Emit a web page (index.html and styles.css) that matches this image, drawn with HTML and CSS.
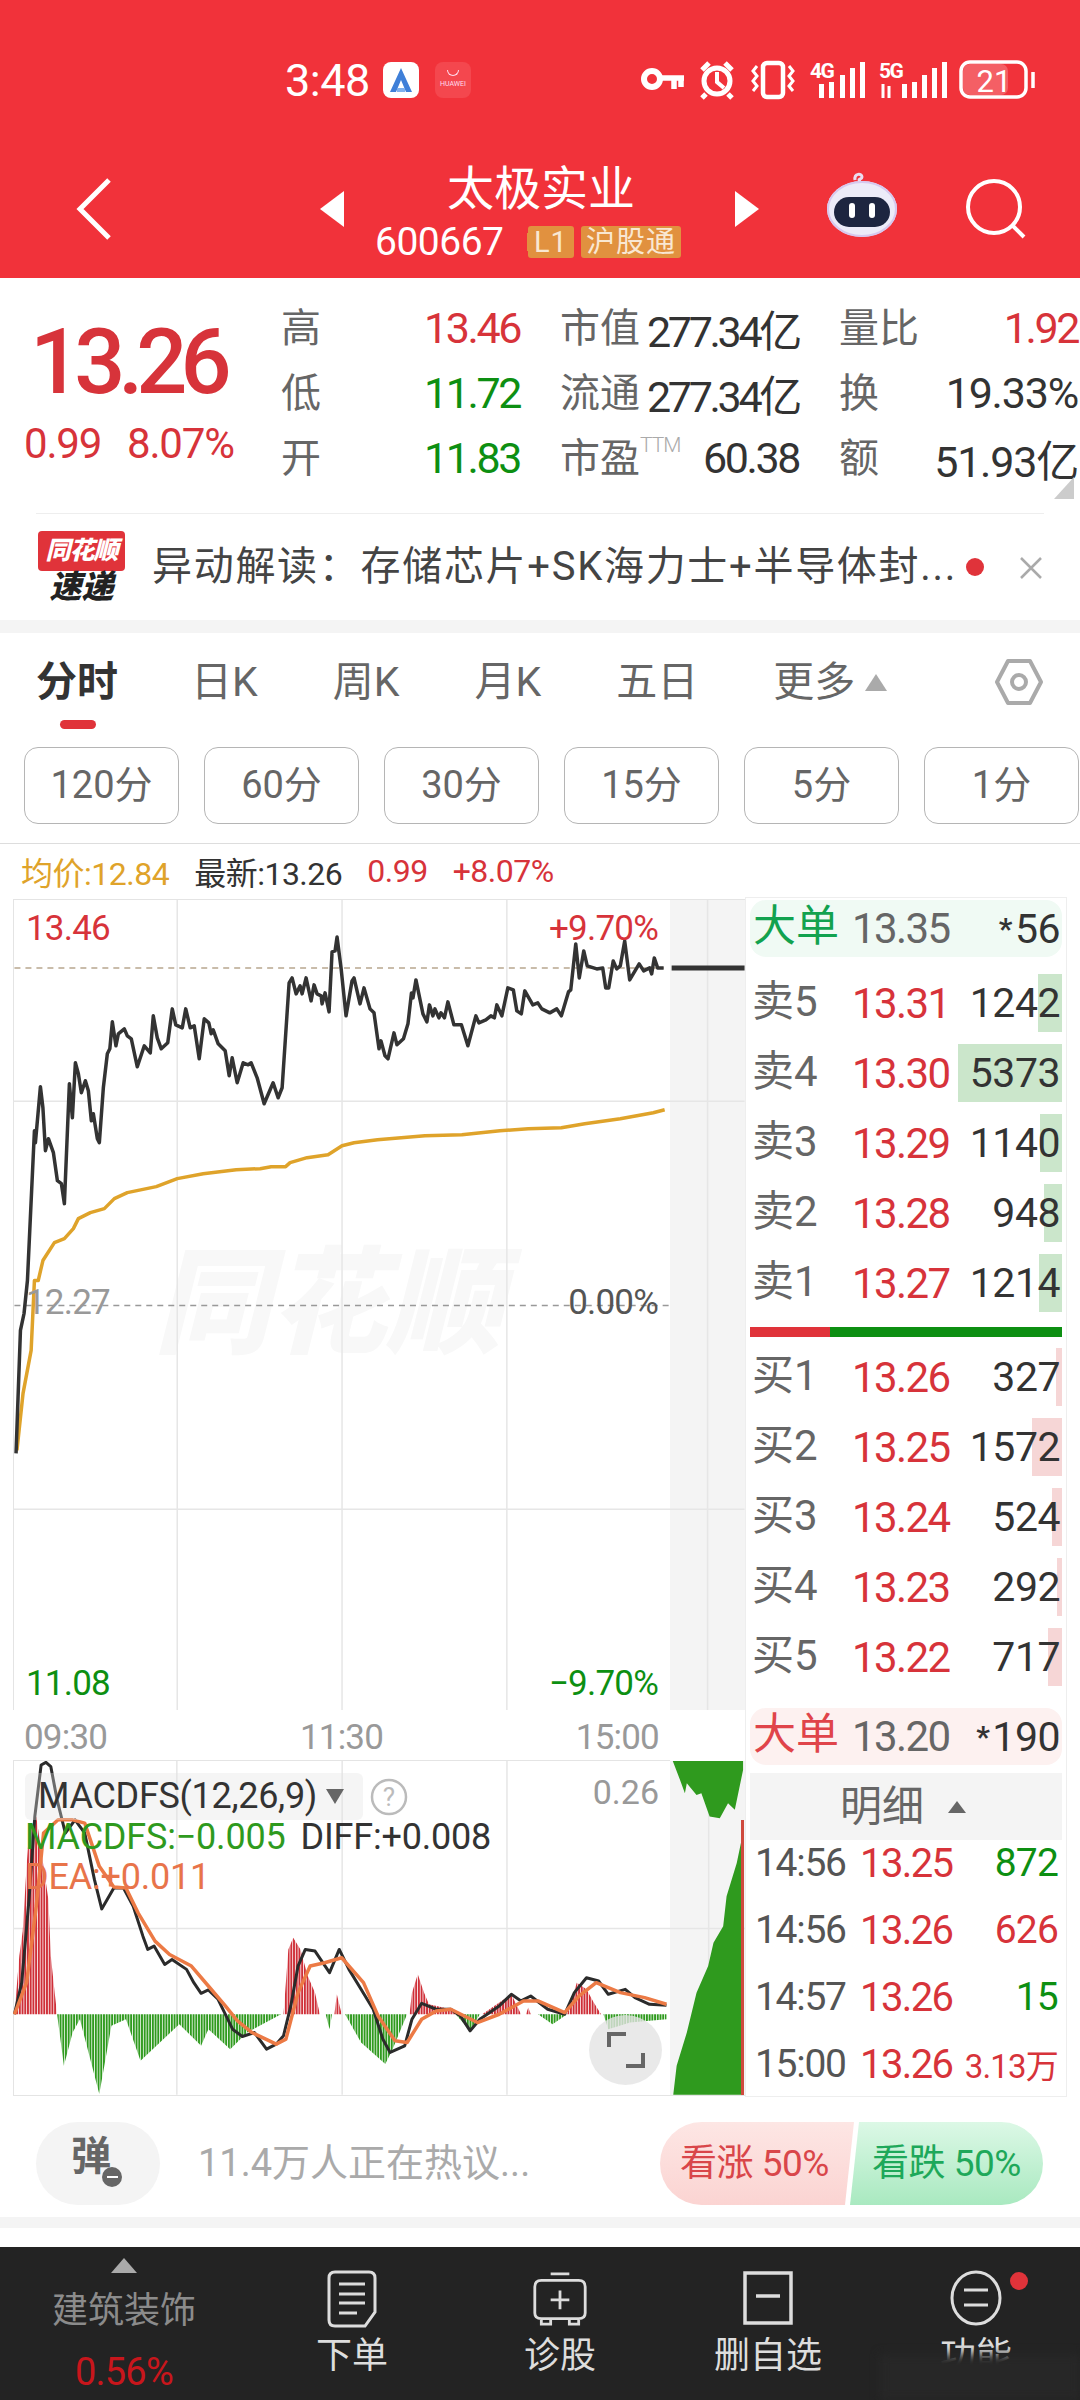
FILE: index.html
```html
<!DOCTYPE html>
<html lang="zh-CN">

<head>
    <meta charset="UTF-8">
    <title>太极实业</title>
    <link rel="stylesheet" href="styles.css">
</head>

<body>
    <!-- Red header -->
    <header class="topbar">
        <div class="status">
            <span class="clock">3:48</span>
            <svg class="app-icon" viewBox="0 0 36 36">
                <rect width="36" height="36" rx="8" fill="#fff" />
                <path d="M18 6 L29 30 H23 L18 18 L13 30 H7 Z" fill="#3f7fd8" />
                <path d="M14 26 H22 V30 H14 Z" fill="#7fb0ee" />
            </svg>
            <span class="huawei"><i></i>HUAWEI</span>
            <svg class="status-icons" viewBox="640 56 400 48">
                <g fill="none" stroke="#fff">
                    <circle cx="654" cy="79" r="8" stroke-width="6" />
                    <path d="M662 78 H686 M676 78 V89 M683 78 V87" stroke-width="5.5" />
                    <circle cx="719" cy="81" r="13" stroke-width="5" />
                    <path d="M719 72 V82 L726 88" stroke-width="4" />
                    <path d="M704 70 L711 63 M734 70 L727 63 M708 94 L704 98 M730 94 L734 98" stroke-width="5" />
                    <rect x="765" y="63" width="20" height="34" rx="4" stroke-width="4.5" />
                    <path d="M759 66 L755 71 L759 76 L755 81 L759 86 L755 91 M791 66 L795 71 L791 76 L795 81 L791 86 L795 91" stroke-width="3" />
                    <rect x="963" y="62" width="65" height="35" rx="9" stroke-width="3.5" />
                    <path d="M1035 72 V88" stroke-width="3.5" />
                </g>
                <rect x="965" y="64" width="45" height="31" rx="7" fill="#fff" opacity=".22" />
                <g fill="#fff">
                    <text x="812" y="78" class="net">4G</text>
                    <rect x="821" y="84" width="5" height="14" /><rect x="831" y="82" width="5" height="16" />
                    <rect x="842" y="75" width="5" height="23" /><rect x="852" y="68" width="5" height="30" />
                    <rect x="862" y="62" width="5" height="36" />
                    <text x="881" y="78" class="net">5G</text>
                    <path d="M885 84 V98 M891 86 V98" stroke="#fff" stroke-width="3" />
                    <rect x="904" y="84" width="5" height="14" /><rect x="914" y="82" width="5" height="16" />
                    <rect x="924" y="75" width="5" height="23" /><rect x="934" y="68" width="5" height="30" />
                    <rect x="944" y="62" width="5" height="36" />
                    <text x="996" y="92" class="batt">21</text>
                </g>
            </svg>
        </div>

        <nav class="titlebar">
            <svg class="back" viewBox="0 0 36 62"><path d="M33 2 L4 31 L33 60" fill="none" stroke="#fff" stroke-width="5" /></svg>
            <span class="tri tri-left"></span>
            <div class="stock">
                <div class="stock-name">太极实业</div>
                <div class="stock-code">
                    <span class="code-num">600667</span>
                    <span class="tag tag-first">L1</span>
                    <span class="tag">沪股通</span>
                </div>
            </div>
            <span class="tri tri-right"></span>
            <svg class="robot" viewBox="0 0 72 68">
                <path d="M29 8 C28 1 36 1 36 5 C36 8 31 6 34 10" fill="none" stroke="#eaddf0" stroke-width="3" />
                <ellipse cx="36" cy="37" rx="35" ry="28" fill="#ecebf8" />
                <ellipse cx="36" cy="37" rx="34" ry="27" fill="none" stroke="#d7c8ee" stroke-width="2" />
                <rect x="8" y="25" width="56" height="30" rx="15" fill="#1d2540" />
                <rect x="23" y="31" width="6" height="15" rx="3" fill="#fff" />
                <rect x="43" y="31" width="6" height="15" rx="3" fill="#fff" />
            </svg>
            <svg class="search" viewBox="0 0 60 60">
                <circle cx="28" cy="28" r="26" fill="none" stroke="#fff" stroke-width="4" />
                <path d="M46 46 L58 58" stroke="#fff" stroke-width="4" />
            </svg>
        </nav>
    </header>

    <!-- Quote numbers -->
    <section class="quote">
        <div class="last">
            <div class="last-price">13.26</div>
            <div class="last-change"><span>0.99</span><span>8.07%</span></div>
        </div>
        <div class="stats">
            <div class="stat"><span class="lbl">高</span><span class="val red">13.46</span></div>
            <div class="stat"><span class="lbl">市值</span><span class="val val-tight">277.34亿</span></div>
            <div class="stat"><span class="lbl">量比</span><span class="val red">1.92</span></div>
            <div class="stat"><span class="lbl">低</span><span class="val green">11.72</span></div>
            <div class="stat"><span class="lbl">流通</span><span class="val val-tight">277.34亿</span></div>
            <div class="stat"><span class="lbl">换</span><span class="val val-loose">19.33%</span></div>
            <div class="stat"><span class="lbl">开</span><span class="val green">11.83</span></div>
            <div class="stat"><span class="lbl">市盈<sup class="ttm">TTM</sup></span><span class="val">60.38</span></div>
            <div class="stat"><span class="lbl">额</span><span class="val val-loose">51.93亿</span></div>
        </div>
        <span class="corner"></span>
    </section>

    <!-- News strip -->
    <section class="news">
        <div class="news-logo">
            <span class="logo-top">同花顺</span>
            <span class="logo-bottom">速递</span>
        </div>
        <div class="news-text">异动解读：存储芯片+SK海力士+半导体封...</div>
        <span class="news-dot"></span>
        <svg class="news-close" viewBox="0 0 24 24"><path d="M2 2 L22 22 M22 2 L2 22" stroke="#aaa" stroke-width="2.5" /></svg>
    </section>

    <div class="band"></div>

    <!-- Period tabs -->
    <div class="tabs">
        <span class="tab tab-active">分时</span>
        <span class="tab">日K</span>
        <span class="tab">周K</span>
        <span class="tab">月K</span>
        <span class="tab">五日</span>
        <span class="tab">更多<i class="more-arrow"></i></span>
        <svg class="hex" viewBox="0 0 50 48">
            <path d="M14 3 H36 L47 24 L36 45 H14 L3 24 Z" fill="none" stroke="#aaa" stroke-width="4" stroke-linejoin="round" />
            <circle cx="25" cy="24" r="7" fill="none" stroke="#aaa" stroke-width="4" />
        </svg>
    </div>

    <div class="periods">
        <span class="period">120分</span>
        <span class="period">60分</span>
        <span class="period">30分</span>
        <span class="period">15分</span>
        <span class="period">5分</span>
        <span class="period">1分</span>
    </div>

    <div class="info">
        <span class="avg">均价:12.84</span>
        <span class="now">最新:13.26</span>
        <span class="red">0.99</span>
        <span class="red">+8.07%</span>
    </div>

    <main class="market">
        <div class="charts">
            <!-- Intraday chart -->
            <div class="day-chart">
                <div class="plot"></div>
                <div class="side"></div>
                <span class="watermark">同花顺</span>
                <svg class="chart-svg" viewBox="13 899 732 811">
                    <path class="grid" d="M177 899 V1710 M342 899 V1710 M507 899 V1710 M708 899 V1710 M13 1100.5 H745 M13 1509 H745" />
                    <path class="dash-tan" d="M14 967 H664" />
                    <path class="dash-gray" d="M14 1305 H670" />
                    <path class="tick" d="M672 967 H745" />
                    <path class="avg-line" d="M16.5 1450 L22.6 1393 L30.7 1350 L34 1280 L37.8 1280 L42.5 1260 L54 1242 L64 1238 L73 1228 L78 1218 L90 1212 L104 1208 L114 1198 L127 1192 L156 1186 L177 1178 L203 1173 L236 1169 L260 1168 L271 1166 L285.5 1166 L290 1162 L307 1157 L328 1154 L342 1145 L354 1142 L377.5 1139 L425 1135 L462 1134 L500 1130 L528.5 1128 L561.6 1127 L585 1123 L620.6 1118 L653.6 1112 L665 1109" />
                    <path class="price-line" d="M15.6 1453 L20 1330 L23.6 1313 L27 1280 L34 1130 L35 1142 L40 1086 L42.5 1107 L45 1150 L48 1138 L53 1152 L57 1180 L61 1183 L64 1203 L69 1083 L72 1117 L75 1062 L78 1073 L81 1092 L85 1080 L88 1090 L91 1120 L93 1113 L97 1138 L99 1142 L103 1087 L107 1053 L109.5 1048 L112 1021 L115.6 1045 L118 1033 L124 1028 L127 1035 L131 1038 L137 1066 L144 1045 L150 1052 L153 1015 L157 1037 L161 1048 L167.5 1042 L172 1008 L175.5 1024 L182 1027 L185.5 1008 L190 1027 L194 1025 L199 1058 L204 1018 L208.6 1022 L211 1033 L213 1029 L218 1043 L225 1050 L229 1075 L232 1057 L237 1082 L243 1062 L248 1064 L251 1062 L257 1077 L264 1103 L273 1082 L278 1097 L282 1087 L289 982 L292 977 L296 993 L300 985 L302 993 L306 977 L311 1000 L314 984 L317 993 L321 995 L322 1003 L325 992 L329 1011 L332 951 L335 950 L337 936 L341 967 L346 1015 L352 980 L354 977 L360 1003 L364 987 L370 1008 L374 1012 L379 1048 L381 1040 L385 1055 L388 1058 L394 1032 L397 1044 L403.5 1038 L408 1023 L411.5 992 L413 997 L416 979 L423 1013 L427 1021 L429.5 1004 L433 1015 L435 1008 L439 1017 L441 1012 L444.5 1017 L448 1001 L454 1024 L461.5 1024 L468 1045 L476 1015 L479 1022 L486 1019 L491 1015 L494.5 1017 L497 1004 L502 1015 L508 987 L513.5 989 L517 1010 L521.5 1013 L525 990 L533 1004 L538 1002 L542 1008 L550 1012 L557 1008 L561.6 1015 L568.7 991 L571 989 L576 943 L579.5 977 L584 950 L587.5 965 L597 968 L603 967 L606 987 L609 987 L613.5 960 L617 968 L620.6 965 L625 940 L630 979 L639.5 963 L644 970 L650 967 L652 973 L654.6 957 L658 967 L664 967" />
                </svg>
                <span class="axis axis-top-left red">13.46</span>
                <span class="axis axis-top-right red">+9.70%</span>
                <span class="axis axis-mid-left">12.27</span>
                <span class="axis axis-mid-right">0.00%</span>
                <span class="axis axis-low-left green">11.08</span>
                <span class="axis axis-low-right green">−9.70%</span>
            </div>

            <div class="times"><span>09:30</span><span>11:30</span><span>15:00</span></div>

            <!-- MACD chart, points are in its own stretched units -->
            <div class="macd">
                <div class="plot"></div>
                <div class="side"></div>
                <svg class="chart-svg" viewBox="27 183 1510 1005" preserveAspectRatio="none">
                    <defs>
                        <pattern id="barsRed" width="5.6" height="10" patternUnits="userSpaceOnUse"><rect width="4" height="10" fill="#cf2f38" /></pattern>
                        <pattern id="barsGreen" width="5.6" height="10" patternUnits="userSpaceOnUse"><rect width="4" height="10" fill="#2f9a1e" /></pattern>
                    </defs>
                    <path class="grid" d="M365 183 V1187 M706 183 V1187 M1046 183 V1187 M1462 183 V1187 M27 687 H1537" />
                    <path fill="url(#barsRed)" d="M30 945 L40 770 L47 695 L55 500 L60 400 L75 350 L100 600 L105 770 L113 880 L118 945 Z M585 945 L595 750 L605 715 L620 750 L635 830 L650 880 L660 945 Z M690 945 L695 885 L705 945 Z M845 945 L850 880 L862 825 L875 880 L885 915 L930 930 L945 945 Z M995 945 L1030 910 L1055 885 L1075 945 Z M1085 945 L1090 925 L1095 945 Z M1170 945 L1190 850 L1210 870 L1225 910 L1240 945 Z" />
                    <path fill="url(#barsGreen)" d="M118 945 L132 1100 L150 1000 L165 960 L205 1185 L230 980 L260 960 L290 1085 L330 1030 L370 975 L415 1040 L430 990 L475 1050 L510 1000 L580 945 Z M672 945 L680 990 L685 945 Z M712 945 L745 1030 L795 1095 L810 1050 L840 945 Z M940 945 L970 995 L990 945 Z M1110 945 L1140 975 L1170 945 Z M1245 945 L1255 990 L1300 970 L1375 960 L1375 945 Z" />
                    <path class="diff-line" d="M30 945 L45 850 L60 600 L72 350 L85 195 L95 187 L105 200 L118 300 L135 400 L155 360 L175 400 L195 540 L210 628 L235 565 L255 565 L275 620 L295 710 L305 750 L318 740 L340 795 L355 780 L385 810 L400 850 L415 882 L430 872 L450 900 L480 990 L500 1012 L525 1000 L550 1050 L570 1035 L585 1010 L600 920 L615 800 L630 750 L650 755 L680 820 L700 750 L720 810 L745 870 L770 930 L790 1020 L805 1060 L835 1040 L850 960 L870 912 L900 930 L930 930 L950 950 L970 995 L990 960 L1030 920 L1055 885 L1075 905 L1095 890 L1130 930 L1165 945 L1185 880 L1210 835 L1235 845 L1255 885 L1290 870 L1310 895 L1340 915 L1375 918" />
                    <path class="dea-line" d="M30 945 L55 850 L75 620 L90 400 L120 360 L150 360 L175 370 L205 500 L235 562 L260 565 L285 640 L320 725 L350 765 L395 800 L430 860 L465 920 L490 965 L520 1000 L570 1035 L590 1020 L615 880 L640 800 L670 790 L705 775 L750 850 L780 950 L815 1025 L840 1030 L870 960 L900 935 L930 930 L985 970 L1030 945 L1080 905 L1110 905 L1165 940 L1195 890 L1230 850 L1280 880 L1330 895 L1375 915" />
                    <path fill="#2f9a1e" d="M1388 183 L1403 240 L1413 280 L1417 250 L1437 285 L1447 280 L1464 350 L1485 355 L1502 310 L1516 330 L1533 210 L1533 183 Z" />
                    <path fill="#2f9a1e" d="M1389 1187 L1396 1100 L1417 1000 L1437 880 L1461 800 L1472 730 L1492 680 L1499 590 L1520 490 L1530 420 L1533 360 L1533 1187 Z" />
                </svg>
                <div class="macd-picker">MACDFS(12,26,9)<i class="picker-arrow"></i></div>
                <svg class="help" viewBox="0 0 38 38">
                    <circle cx="19" cy="19" r="17" fill="none" stroke="#bbb" stroke-width="2.5" />
                    <text x="19" y="28" class="help-mark">?</text>
                </svg>
                <div class="macd-values"><span class="macd-green">MACDFS:−0.005</span><span>DIFF:+0.008</span></div>
                <div class="macd-dea">DEA:+0.011</div>
                <span class="macd-max">0.26</span>
                <span class="vol-line"></span>
                <span class="expand">
                    <svg viewBox="0 0 38 36"><path d="M2 15 V2 H19 M36 21 V34 H19" fill="none" stroke="#666" stroke-width="4" /></svg>
                </span>
            </div>
        </div>

        <!-- Order book -->
        <aside class="book">
            <div class="big big-green"><span class="big-name">大单</span><span class="big-price">13.35</span><span class="big-qty"><b>*</b>56</span></div>
            <div class="orders">
                <div class="order"><span class="side-name">卖5</span><span class="price">13.31</span><span class="bar bar-sell" style="width:24px"></span><span class="qty">1242</span></div>
                <div class="order"><span class="side-name">卖4</span><span class="price">13.30</span><span class="bar bar-sell" style="width:104px"></span><span class="qty">5373</span></div>
                <div class="order"><span class="side-name">卖3</span><span class="price">13.29</span><span class="bar bar-sell" style="width:22px"></span><span class="qty">1140</span></div>
                <div class="order"><span class="side-name">卖2</span><span class="price">13.28</span><span class="bar bar-sell" style="width:18px"></span><span class="qty">948</span></div>
                <div class="order"><span class="side-name">卖1</span><span class="price">13.27</span><span class="bar bar-sell" style="width:23px"></span><span class="qty">1214</span></div>
            </div>
            <div class="ratio"><span class="ratio-red"></span><span class="ratio-green"></span></div>
            <div class="orders orders-buy">
                <div class="order"><span class="side-name">买1</span><span class="price">13.26</span><span class="bar bar-buy" style="width:6px"></span><span class="qty">327</span></div>
                <div class="order"><span class="side-name">买2</span><span class="price">13.25</span><span class="bar bar-buy" style="width:30px"></span><span class="qty">1572</span></div>
                <div class="order"><span class="side-name">买3</span><span class="price">13.24</span><span class="bar bar-buy" style="width:10px"></span><span class="qty">524</span></div>
                <div class="order"><span class="side-name">买4</span><span class="price">13.23</span><span class="bar bar-buy" style="width:5px"></span><span class="qty">292</span></div>
                <div class="order"><span class="side-name">买5</span><span class="price">13.22</span><span class="bar bar-buy" style="width:14px"></span><span class="qty">717</span></div>
            </div>
            <div class="big big-red"><span class="big-name">大单</span><span class="big-price">13.20</span><span class="big-qty"><b>*</b>190</span></div>
            <div class="detail-head">明细<i class="detail-arrow"></i></div>
            <div class="ticks">
                <div class="tick-row"><span class="tick-time">14:56</span><span class="tick-price red">13.25</span><span class="tick-qty green">872</span></div>
                <div class="tick-row"><span class="tick-time">14:56</span><span class="tick-price red">13.26</span><span class="tick-qty red">626</span></div>
                <div class="tick-row"><span class="tick-time">14:57</span><span class="tick-price red">13.26</span><span class="tick-qty green">15</span></div>
                <div class="tick-row"><span class="tick-time">15:00</span><span class="tick-price red">13.26</span><span class="tick-qty tick-small red">3.13万</span></div>
            </div>
        </aside>
    </main>

    <!-- Comment bar -->
    <section class="talk">
        <div class="danmu">弹<i class="danmu-off"></i></div>
        <div class="talk-text">11.4万人正在热议...</div>
        <div class="vote">
            <span class="vote-up">看涨 50%</span>
            <span class="vote-down">看跌 50%</span>
        </div>
    </section>

    <div class="band band-low"></div>

    <!-- Bottom bar -->
    <footer class="bottom">
        <div class="sector">
            <i class="sector-arrow"></i>
            <span class="sector-name">建筑装饰</span>
            <span class="sector-pct">0.56%</span>
        </div>
        <div class="action">
            <svg viewBox="0 0 50 58"><path d="M8 2 H42 Q48 2 48 8 V42 L38 56 H8 Q2 56 2 50 V8 Q2 2 8 2 Z M12 14 H38 M12 24 H38 M12 33 H38 M12 43 H30" fill="none" stroke="#ddd" stroke-width="3" /></svg>
            <span>下单</span>
        </div>
        <div class="action">
            <svg viewBox="0 0 60 58"><path d="M20 2 H40 M10 9 H50 Q57 9 57 16 V44 Q57 50 50 50 H10 Q3 50 3 44 V16 Q3 9 10 9 Z M30 20 V40 M20 30 H40 M10 50 V56 H20 V50 M40 50 V56 H50 V50" fill="none" stroke="#ddd" stroke-width="3" /></svg>
            <span>诊股</span>
        </div>
        <div class="action">
            <svg viewBox="0 0 50 58"><path d="M2 3 H48 V53 H2 Z M13 26 H37" fill="none" stroke="#ddd" stroke-width="3.5" /></svg>
            <span>删自选</span>
        </div>
        <div class="action">
            <svg viewBox="0 0 52 58"><ellipse cx="26" cy="28" rx="24" ry="26" fill="none" stroke="#ddd" stroke-width="3" /><path d="M14 20 H38 M14 35 H38" stroke="#ddd" stroke-width="3" /></svg>
            <span>功能</span>
            <i class="action-dot"></i>
        </div>
        <span class="smudge"></span>
    </footer>
</body>

</html>
```
FILE: styles.css
```css
/* General page */
body {
    margin: 0;
    width: 1080px;
    height: 2400px;
    overflow: hidden;
    background: #fff;
    color: #333;
    font-family: Roboto, "Noto Sans CJK SC", sans-serif;
}

i {
    display: block;
}

.red {
    color: #d7333a;
}

.green {
    color: #0d8f12;
}

/* Red header */
.topbar {
    height: 278px;
    background: #f1323a;
    color: #fff;
}

.status {
    height: 140px;
    padding: 20px 42px 0 285px;
    box-sizing: border-box;
    display: flex;
    align-items: center;
}

.clock {
    font-size: 45px;
    width: 98px;
    letter-spacing: -0.5px;
}

.app-icon {
    width: 36px;
    height: 36px;
}

.huawei {
    width: 36px;
    height: 36px;
    margin-left: 16px;
    border-radius: 8px;
    background: #f4474e;
    font-size: 7px;
    text-align: center;
    color: #fde;
    overflow: hidden;
}

.huawei i {
    width: 10px;
    height: 5px;
    margin: 8px auto 4px;
    border: 1px solid #fde;
    border-top: none;
    border-radius: 0 0 8px 8px;
}

.status-icons {
    width: 400px;
    height: 48px;
    margin-left: auto;
}

.net {
    font-size: 21px;
    font-weight: 700;
    letter-spacing: -1.5px;
}

.batt {
    font-size: 31px;
    text-anchor: middle;
}

.titlebar {
    height: 138px;
    display: flex;
    align-items: center;
}

.back {
    width: 36px;
    height: 62px;
    margin: 0 0 0 76px;
}

.tri {
    width: 0;
    height: 0;
    border-top: 18px solid transparent;
    border-bottom: 18px solid transparent;
}

.tri-left {
    margin-left: 208px;
    border-right: 24px solid #fff;
}

.tri-right {
    border-left: 24px solid #fff;
}

.stock {
    width: 391px;
}

.stock-name {
    height: 66px;
    line-height: 66px;
    padding-left: 103px;
    font-size: 47px;
}

.stock-code {
    display: flex;
    align-items: center;
    height: 40px;
    padding-left: 31px;
}

.code-num {
    font-size: 39px;
    width: 153px;
    letter-spacing: -0.5px;
}

.tag {
    height: 32px;
    line-height: 32px;
    padding: 0 5px;
    background: #e1913f;
    border-radius: 3px;
    color: #f9e7d2;
    font-size: 29px;
    letter-spacing: 1px;
}

.tag-first {
    margin-right: 7px;
    padding: 0 6px;
    box-shadow: -8px 0 0 -7px #e1913f;
}

.robot {
    width: 72px;
    height: 68px;
    margin: 0 0 6px 67px;
}

.search {
    width: 60px;
    height: 60px;
    margin-left: 68px;
}

/* Quote numbers */
.quote {
    position: relative;
    height: 235px;
    box-sizing: border-box;
    padding-top: 17px;
    display: flex;
}

.last {
    width: 281px;
    flex-shrink: 0;
    color: #d7333a;
}

.last-price {
    height: 90px;
    margin: 23px 0 0 30px;
    font-size: 90px;
    line-height: 90px;
    font-weight: 500;
    letter-spacing: -7px;
}

.last-change {
    display: flex;
    gap: 26px;
    margin: 11px 0 0 24px;
    font-size: 42px;
    line-height: 50px;
    letter-spacing: -1.2px;
}

.stats {
    width: 797px;
    display: grid;
    grid-template-columns: repeat(3, 239px);
    grid-auto-rows: 65px;
    column-gap: 40px;
}

.stat {
    display: flex;
    justify-content: space-between;
    align-items: center;
}

.lbl {
    font-size: 40px;
    color: #666;
    display: flex;
    align-items: flex-start;
    padding-bottom: 5px;
}

.val {
    font-size: 43px;
    letter-spacing: -2.4px;
}

.val-tight {
    letter-spacing: -3.3px;
}

.val-loose {
    letter-spacing: -1.2px;
}

.ttm {
    font-size: 21px;
    line-height: 38px;
    color: #aaa;
    font-weight: 300;
    letter-spacing: -1px;
}

.corner {
    position: absolute;
    right: 6px;
    bottom: 14px;
    width: 0;
    height: 0;
    border-left: 20px solid transparent;
    border-bottom: 22px solid #ccc;
}

/* News strip */
.news {
    margin: 0 36px;
    height: 107px;
    border-top: 1px solid #eee;
    box-sizing: border-box;
    display: flex;
    align-items: center;
    position: relative;
}

.news-logo {
    width: 114px;
    flex-shrink: 0;
    margin-left: 2px;
}

.logo-top {
    display: block;
    width: 87px;
    height: 40px;
    line-height: 40px;
    background: #e0333a;
    color: #fff;
    border-radius: 4px;
    font-size: 25px;
    font-weight: 900;
    font-style: italic;
    text-align: center;
    letter-spacing: -1px;
}

.logo-bottom {
    display: block;
    width: 87px;
    height: 32px;
    line-height: 32px;
    text-align: center;
    color: #222;
    font-size: 32px;
    font-weight: 900;
    font-style: italic;
}

.news-text {
    font-size: 40px;
    line-height: 50px;
    padding-bottom: 1px;
    color: #444;
    white-space: nowrap;
    letter-spacing: 1.7px;
    width: 809px;
}

.news-dot {
    position: absolute;
    left: 930px;
    top: 44px;
    width: 18px;
    height: 18px;
    border-radius: 50%;
    background: #e0333a;
}

.news-close {
    position: absolute;
    left: 983px;
    top: 42px;
    width: 24px;
    height: 24px;
}

.band {
    height: 13px;
    background: #f4f4f4;
}

/* Tabs */
.tabs {
    height: 114px;
    box-sizing: border-box;
    padding: 24px 0 0 36px;
    display: flex;
    gap: 75px;
    position: relative;
}

.tab {
    font-size: 41px;
    line-height: 50px;
    height: 50px;
    color: #666;
    display: flex;
    align-items: center;
}

.tab-active {
    font-weight: 700;
    color: #333;
    margin-right: -2px;
    position: relative;
}

.tab-active::after {
    content: "";
    position: absolute;
    left: 24px;
    top: 63px;
    width: 36px;
    height: 9px;
    border-radius: 5px;
    background: #e0333a;
}

.more-arrow {
    width: 0;
    height: 0;
    margin-left: 10px;
    border-left: 11px solid transparent;
    border-right: 11px solid transparent;
    border-bottom: 17px solid #aaa;
}

.hex {
    position: absolute;
    left: 994px;
    top: 25px;
    width: 50px;
    height: 48px;
}

.periods {
    display: flex;
    gap: 25px;
    padding-left: 24px;
}

.period {
    width: 155px;
    height: 77px;
    box-sizing: border-box;
    flex-shrink: 0;
    border: 1px solid #b5b5b5;
    border-radius: 14px;
    font-size: 38px;
    line-height: 75px;
    text-align: center;
    color: #666;
}

.info {
    margin-top: 19px;
    height: 54px;
    box-sizing: border-box;
    padding-left: 21px;
    border-top: 1px solid #ddd;
    display: flex;
    gap: 25px;
    align-items: center;
    font-size: 32px;
    letter-spacing: -0.5px;
}

.avg {
    color: #dfa32a;
}

/* Charts and order book */
.market {
    height: 1200px;
    display: flex;
    padding-left: 13px;
}

.charts {
    width: 732px;
    padding-top: 2px;
    flex-shrink: 0;
}

.day-chart,
.macd {
    position: relative;
    display: flex;
    border-left: 1px solid #e4e4e4;
    box-sizing: border-box;
}

.day-chart {
    height: 811px;
    border-top: 1px solid #e4e4e4;
}

.macd {
    height: 335px;
    border-bottom: 1px solid #e4e4e4;
}

.plot {
    width: 656px;
}

.side {
    flex: 1;
    background: #f4f4f4;
}

.chart-svg {
    position: absolute;
    left: -1px;
    top: 0;
    width: 732px;
    height: 100%;
}

.watermark {
    position: absolute;
    left: 140px;
    top: 346px;
    font-size: 116px;
    line-height: 116px;
    font-weight: 900;
    font-style: italic;
    color: #f8f8f8;
}

.grid {
    stroke: #e6e6e6;
    stroke-width: 1.5;
    fill: none;
    vector-effect: non-scaling-stroke;
}

.dash-tan {
    stroke: #b8a78e;
    stroke-width: 1.5;
    stroke-dasharray: 6 5;
}

.dash-gray {
    stroke: #999;
    stroke-width: 1.5;
    stroke-dasharray: 6 5;
}

.tick {
    stroke: #333;
    stroke-width: 5;
}

.price-line,
.avg-line,
.diff-line,
.dea-line {
    fill: none;
    stroke-linejoin: round;
    vector-effect: non-scaling-stroke;
}

.price-line {
    stroke: #333;
    stroke-width: 3.5;
}

.avg-line {
    stroke: #dfa32a;
    stroke-width: 3.5;
}

.diff-line {
    stroke: #2b2b2b;
    stroke-width: 3;
}

.dea-line {
    stroke: #ec7a45;
    stroke-width: 3.5;
}

.axis {
    position: absolute;
    font-size: 35px;
    line-height: 33px;
    letter-spacing: -0.8px;
}

.axis-top-left,
.axis-mid-left,
.axis-low-left {
    left: 12px;
}

.axis-top-right,
.axis-mid-right,
.axis-low-right {
    right: 87px;
}

.axis-top-left,
.axis-top-right {
    top: 12px;
}

.axis-mid-left {
    top: 386px;
    color: #999;
}

.axis-mid-right {
    top: 386px;
    color: #555;
}

.axis-low-left,
.axis-low-right {
    top: 767px;
}

.times {
    width: 657px;
    height: 51px;
    box-sizing: border-box;
    padding: 4px 11px 0;
    display: flex;
    justify-content: space-between;
    align-items: center;
    border-bottom: 1px solid #e4e4e4;
    color: #999;
    font-size: 35px;
    letter-spacing: -0.8px;
}

.macd-picker {
    position: absolute;
    left: 11px;
    top: 12px;
    width: 338px;
    height: 47px;
    box-sizing: border-box;
    padding-left: 13px;
    background: rgba(225, 225, 225, 0.35);
    border-radius: 6px;
    font-size: 36px;
    line-height: 47px;
    color: #333;
    display: flex;
    align-items: center;
    letter-spacing: -0.3px;
}

.picker-arrow {
    width: 0;
    height: 0;
    margin-left: 9px;
    border-left: 9px solid transparent;
    border-right: 9px solid transparent;
    border-top: 15px solid #666;
}

.help {
    position: absolute;
    left: 356px;
    top: 17px;
    width: 38px;
    height: 38px;
}

.help-mark {
    font-size: 26px;
    fill: #bbb;
    text-anchor: middle;
}

.macd-values {
    position: absolute;
    left: 11px;
    top: 56px;
    display: flex;
    gap: 15px;
    font-size: 36px;
    line-height: 40px;
    letter-spacing: -0.2px;
}

.macd-green {
    color: #2f9a1e;
}

.macd-dea {
    position: absolute;
    left: 11px;
    top: 96px;
    font-size: 36px;
    line-height: 40px;
    color: #e8744a;
    letter-spacing: -0.2px;
}

.macd-max {
    position: absolute;
    right: 86px;
    top: 14px;
    font-size: 34px;
    line-height: 34px;
    color: #999;
}

.vol-line {
    position: absolute;
    left: 727px;
    top: 59px;
    bottom: 0;
    width: 3px;
    background: #cf4a3e;
}

.expand {
    position: absolute;
    left: 575px;
    top: 254px;
    width: 73px;
    height: 70px;
    border-radius: 50%;
    background: rgba(228, 228, 228, 0.8);
    display: flex;
    align-items: center;
    justify-content: center;
}

.expand svg {
    width: 38px;
    height: 36px;
}

.book {
    width: 322px;
    height: 1200px;
    box-sizing: border-box;
    border: 1px solid #eee;
    padding: 2px 4px 0;
    flex-shrink: 0;
}

.big {
    height: 57px;
    border-radius: 16px;
    display: flex;
    align-items: center;
    padding: 0 2px 0 3px;
}

.big-green {
    background: #f0faf4;
}

.big-red {
    background: #fdf1f0;
    margin-top: 16px;
}

.big-name {
    width: 99px;
    font-size: 43px;
    line-height: 50px;
    padding-bottom: 6px;
}

.big-green .big-name {
    color: #12a24f;
}

.big-red .big-name {
    color: #e0444a;
}

.big-price {
    color: #666;
    font-size: 42px;
    letter-spacing: -1.6px;
}

.big-qty {
    margin-left: auto;
    font-size: 41px;
    letter-spacing: -0.5px;
    display: flex;
    align-items: center;
}

.big-qty b {
    font-size: 30px;
    margin-right: 3px;
}

.orders {
    margin-top: 11px;
}

.orders-buy {
    margin-top: 5px;
}

.order {
    position: relative;
    height: 70px;
    display: flex;
    align-items: center;
    padding: 0 2px 0 2px;
}

.side-name {
    width: 100px;
    font-size: 42px;
    line-height: 50px;
    padding-bottom: 2px;
    color: #666;
}

.price {
    color: #d7333a;
    font-size: 42px;
    letter-spacing: -1.6px;
}

.qty {
    position: relative;
    margin-left: auto;
    font-size: 41px;
    letter-spacing: -0.5px;
}

.bar {
    position: absolute;
    right: 0;
    top: 6px;
    bottom: 6px;
}

.bar-sell {
    background: #cbe6cb;
}

.bar-buy {
    background: #f6d6d6;
}

.ratio {
    display: flex;
    height: 10px;
    margin-top: 9px;
}

.ratio-red {
    width: 80px;
    background: #e0333a;
}

.ratio-green {
    flex: 1;
    background: #0d8f12;
}

.detail-head {
    margin-top: 8px;
    height: 67px;
    background: #f4f4f4;
    color: #666;
    font-size: 42px;
    line-height: 50px;
    display: flex;
    align-items: center;
    padding-left: 90px;
}

.detail-arrow {
    width: 0;
    height: 0;
    margin-left: 24px;
    border-left: 9px solid transparent;
    border-right: 9px solid transparent;
    border-bottom: 12px solid #666;
}

.ticks {
    display: flex;
    flex-direction: column;
    gap: 21px;
}

.tick-row {
    height: 46px;
    display: flex;
    align-items: center;
    padding: 0 4px 0 5px;
    font-size: 39px;
}

.tick-time {
    width: 105px;
    color: #555;
    letter-spacing: -1.3px;
}

.tick-price {
    font-size: 40px;
    letter-spacing: -1.6px;
}

.tick-qty {
    margin-left: auto;
    letter-spacing: -0.8px;
}

.tick-small {
    font-size: 33px;
}

/* Comment bar */
.talk {
    height: 120px;
    box-sizing: border-box;
    padding: 25px 37px 0 36px;
    display: flex;
}

.danmu {
    position: relative;
    width: 124px;
    height: 83px;
    box-sizing: border-box;
    padding: 10px 0 0 35px;
    border-radius: 42px;
    background: #f4f4f4;
    font-size: 40px;
    font-weight: 700;
    line-height: 50px;
    color: #666;
}

.danmu-off {
    position: absolute;
    left: 66px;
    top: 45px;
    width: 20px;
    height: 20px;
    border-radius: 50%;
    background: #666;
    display: flex;
    align-items: center;
    justify-content: center;
}

.danmu-off::after {
    content: "";
    width: 11px;
    height: 2px;
    background: #fff;
}

.talk-text {
    margin-left: 38px;
    width: 462px;
    font-size: 38px;
    line-height: 83px;
    color: #aaa;
}

.vote {
    width: 383px;
    height: 83px;
    border-radius: 42px;
    overflow: hidden;
    display: flex;
    font-size: 37px;
    line-height: 83px;
    letter-spacing: -0.5px;
}

.vote-up {
    width: 194px;
    box-sizing: border-box;
    padding-left: 20px;
    background: linear-gradient(#fde6e4, #fbd4d2);
    color: #d9464a;
    clip-path: polygon(0 0, 100% 0, 185px 100%, 0 100%);
}

.vote-down {
    width: 193px;
    margin-left: -4px;
    box-sizing: border-box;
    padding-left: 22px;
    background: linear-gradient(#dcf8e6, #a9e9c0);
    color: #1ea85a;
    clip-path: polygon(9px 0, 100% 0, 100% 100%, 0 100%);
}

.band-low {
    height: 11px;
    margin-bottom: 19px;
}

/* Bottom bar */
.bottom {
    position: relative;
    height: 153px;
    background: #232323;
    display: grid;
    grid-template-columns: 248px repeat(4, 208px);
    color: #ddd;
}

.sector {
    display: flex;
    flex-direction: column;
    align-items: center;
    color: #8b8b8b;
}

.sector-arrow {
    width: 0;
    height: 0;
    margin-top: 11px;
    border-left: 13px solid transparent;
    border-right: 13px solid transparent;
    border-bottom: 15px solid #aaa;
}

.sector-name {
    margin-top: 14px;
    font-size: 36px;
    line-height: 48px;
}

.sector-pct {
    margin-top: 13px;
    font-size: 38px;
    line-height: 48px;
    color: #c8161c;
    letter-spacing: -0.8px;
}

.action {
    position: relative;
    display: flex;
    flex-direction: column;
    align-items: center;
    font-size: 36px;
}

.action svg {
    height: 58px;
    width: 56px;
    margin-top: 23px;
}

.action span {
    margin-top: 4px;
    line-height: 48px;
}

.action-dot {
    position: absolute;
    left: 138px;
    top: 25px;
    width: 18px;
    height: 18px;
    border-radius: 50%;
    background: #e0333a;
}

.smudge {
    position: absolute;
    left: 880px;
    top: 107px;
    width: 200px;
    height: 46px;
    background: #272727;
    filter: blur(5px);
}
```
